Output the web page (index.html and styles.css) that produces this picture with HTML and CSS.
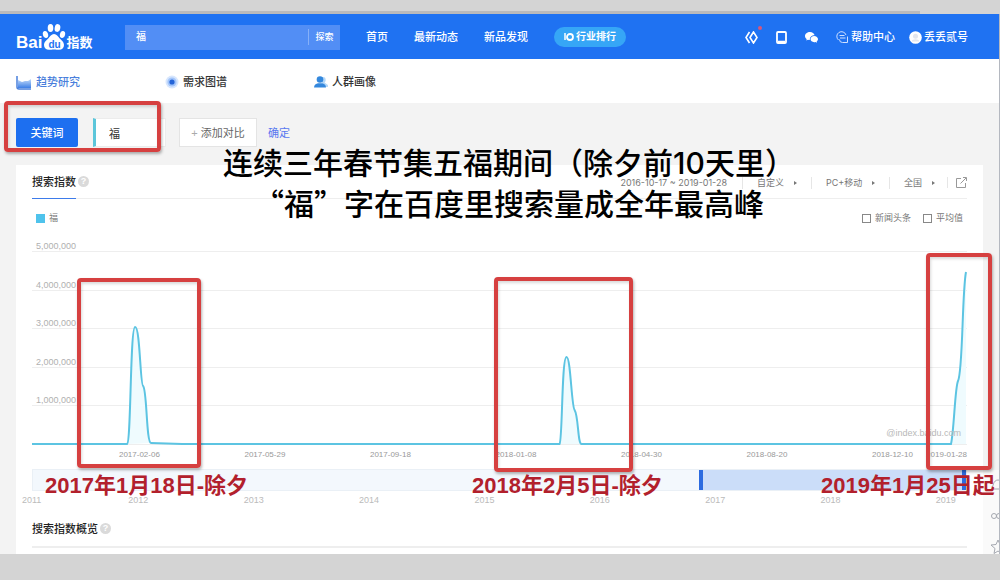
FILE: index.html
```html
<!DOCTYPE html>
<html lang="zh-CN">
<head>
    <meta charset="UTF-8">
    <meta name="viewport" content="width=device-width, initial-scale=1.0">
    <title>百度指数</title>
    <link rel="stylesheet" href="styles.css">
</head>
<body>
    <div class="strip"></div>
    <div class="window">
        <header class="header">
            <a class="logo" href="#">
                <span class="logo-bai">Bai</span>
                <span class="paw">
                    <svg width="24" height="28" viewBox="0 0 24 28" fill="#fff">
                        <ellipse cx="3.5" cy="11.5" rx="2.6" ry="3.6" transform="rotate(-15 3.5 11.5)"/>
                        <ellipse cx="8.5" cy="5" rx="2.8" ry="3.9"/>
                        <ellipse cx="15.5" cy="5" rx="2.8" ry="3.9" transform="rotate(12 15.5 5)"/>
                        <ellipse cx="20.5" cy="11.5" rx="2.6" ry="3.6" transform="rotate(12 20.5 11.5)"/>
                        <path d="M12 11c-2.600 0-4 2.300-5.500 4.200C4.500 17.500 2 18.800 2 22c0 3 2 4.800 5 4.800 2 0 3-.4 5-.4s3 .4 5 .4c3 0 5-1.800 5-4.800 0-3.200-2.500-4.500-4.500-6.800C16 13.300 14.600 11 12 11z"/>
                    </svg>
                    <span class="logo-du">du</span>
                </span>
                <span class="logo-name">指数</span>
            </a>
            <form class="search">
                <input type="text" value="福" aria-label="关键词搜索">
                <button type="button">探索</button>
            </form>
            <nav class="nav">
                <a href="#">首页</a>
                <a href="#">最新动态</a>
                <a href="#">新品发现</a>
                <a class="pill" href="#">
                    <svg width="10" height="10" viewBox="0 0 10 10" fill="none" stroke="#fff"><path d="M1 1v7" stroke-width="1.500"/><circle cx="6" cy="5" r="3" stroke-width="1.800"/></svg>
                    行业排行
                </a>
            </nav>
            <div class="tools">
                <a class="has-dot" href="#" aria-label="数据">
                    <svg width="13" height="13" viewBox="0 0 13 13" fill="none" stroke="#fff" stroke-width="1.600"><path d="M4.500 1L1 6.500 4.500 12M8.500 1L5 6.500 8.500 12 12 6.500z"/></svg>
                </a>
                <a href="#" aria-label="手机版">
                    <svg width="11" height="13" viewBox="0 0 11 13" fill="none" stroke="#fff"><rect x="1" y="1" width="9" height="11" rx="1" stroke-width="1.800"/><path d="M2 10.500h7" stroke-width="1.500"/></svg>
                </a>
                <a href="#" aria-label="微信">
                    <svg width="13" height="11" viewBox="0 0 13 11" fill="#fff"><path d="M5 0C2.200 0 0 1.800 0 4c0 1.200.7 2.300 1.700 3L1.300 8.500 3 7.700c.6.200 1.200.300 1.800.300C4.500 5 6.800 3.300 9.600 3.300 9.200 1.400 7.300 0 5 0z"/><path d="M9.200 4C7 4 5.500 5.400 5.500 7.100s1.600 3.100 3.700 3.100c.5 0 1-.1 1.400-.200l1.400.8-.3-1.300c.8-.6 1.300-1.400 1.300-2.400C13 5.400 11.300 4 9.200 4z"/></svg>
                </a>
                <a class="help" href="#">
                    <svg width="13" height="13" viewBox="0 0 13 13" fill="none" stroke="#cfe0ff"><path d="M2.500 9A4.700 4.700 0 1 1 10 4M3.500 4.500h5M4 7h5.500"/><path d="M11.500 5.500v6H6.500a3 3 0 0 1-3-3"/></svg>
                    帮助中心
                </a>
                <a class="user" href="#">
                    <svg width="13" height="13" viewBox="0 0 13 13"><circle cx="6.500" cy="6.500" r="6.300" fill="#fff"/><circle cx="6.500" cy="5.300" r="2.500" fill="#e3e6ee"/><path d="M2.500 10.500c1-3 7-3 8 0" fill="#e3e6ee"/></svg>
                    丢丢贰号
                </a>
            </div>
        </header>

        <nav class="tabs">
            <a class="active" href="#">
                <svg width="16" height="15" viewBox="0 0 16 15"><defs><linearGradient id="area" x1="0" y1="0" x2="0" y2="1"><stop offset="0" stop-color="#c4dcfa"/><stop offset="1" stop-color="#3d7fe6"/></linearGradient></defs><path d="M2 5l4 2 3-1 3 0 3-2v9H2z" fill="url(#area)"/><path d="M1 1v11q0 2 2 2h12" fill="none" stroke="#4a80dc" stroke-width="1.500"/></svg>
                趋势研究
            </a>
            <a href="#">
                <svg width="14" height="14" viewBox="0 0 14 14"><circle cx="7" cy="7" r="6.500" fill="#d7e6fd"/><circle cx="7" cy="7" r="4.600" fill="#a3c5fa"/><circle cx="7" cy="7" r="2.600" fill="#2464d8"/></svg>
                需求图谱
            </a>
            <a href="#">
                <svg width="14" height="12" viewBox="0 0 14 12"><path d="M8 1c5-1 4 5 2.500 5.500L14 9v2H8z" fill="#b5d8f8"/><circle cx="6" cy="3.500" r="3.300" fill="#3488dd"/><path d="M0 11.500C0 8.500 2 7.500 4 7.200h4c2 .3 4 1.300 4 4.300z" fill="#3488dd"/></svg>
                人群画像
            </a>
        </nav>

        <main class="main">
            <div class="keywords">
                <button class="kw-label" type="button">关键词</button>
                <input class="kw-input" type="text" value="福" aria-label="关键词">
                <button class="kw-add" type="button"><span>+</span> 添加对比</button>
                <a class="kw-ok" href="#">确定</a>
            </div>

            <section class="panel">
                <div class="panel-head">
                    <h2>搜索指数</h2>
                    <span class="q">?</span>
                    <div class="filters">
                        <button type="button">2016-10-17 ~ 2019-01-28</button>
                        <label><select aria-label="时间"><option>自定义</option></select><i></i></label>
                        <label><select aria-label="终端"><option>PC+移动</option></select><i></i></label>
                        <label><select aria-label="地区"><option>全国</option></select><i></i></label>
                        <a href="#" aria-label="导出"><svg width="11" height="11" viewBox="0 0 11 11" fill="none" stroke="#999"><path d="M5 1.500H.5v9h9V6M4.500 6.500L10 1M7 .5h3.500V4"/></svg></a>
                    </div>
                </div>

                <div class="legend">
                    <span class="series">福</span>
                    <label><input type="checkbox">新闻头条</label>
                    <label><input type="checkbox">平均值</label>
                </div>

                <div class="chart">
                    <div class="row top">5,000,000</div>
                    <div class="plot">
                        <div class="row">4,000,000</div>
                        <div class="row">3,000,000</div>
                        <div class="row">2,000,000</div>
                        <div class="row">1,000,000</div>
                        <div class="row"></div>
                        <svg class="curve" viewBox="0 0 934 193" preserveAspectRatio="none">
                            <path class="fill" d="M95 192C99 190 98 75 103 75C108 75 108 133 111 134C115 138 114 191 119 191zM527 192C530 188 529 105 534 105C538 105 539 155 542 158C546 164 545 192 549 192zM918 192C921 180 922 135 925 129C930 120 929 40 933 20V192z"/>
                            <path class="line" d="M0 192H95C99 190 98 75 103 75C108 75 108 133 111 134C115 138 114 191 119 191L150 192H527C530 188 529 105 534 105C538 105 539 155 542 158C546 164 545 192 549 192H918C921 180 922 135 925 129C930 120 929 40 933 20"/>
                        </svg>
                        <span class="watermark">@index.baidu.com</span>
                    </div>
                    <div class="dates">
                        <span>2017-02-06</span><span>2017-05-29</span><span>2017-09-18</span><span>2018-01-08</span><span>2018-04-30</span><span>2018-08-20</span><span>2018-12-10</span><span>2019-01-28</span>
                    </div>
                    <div class="range"><div class="range-on"></div></div>
                </div>
                <div class="years">
                    <span>2011</span><span>2012</span><span>2013</span><span>2014</span><span>2015</span><span>2016</span><span>2017</span><span>2018</span><span>2019</span>
                </div>

                <div class="overview">
                    <h2>搜索指数概览</h2>
                    <span class="q">?</span>
                </div>
            </section>
        </main>

        <aside class="side">
            <svg width="16" height="16" viewBox="0 0 16 16"><path d="M2 12C3 10 3 3 8 3s5 7 6 9z"/></svg>
            <svg width="16" height="16" viewBox="0 0 16 16"><circle cx="4" cy="8" r="2.500"/><circle cx="9" cy="8" r="2.500"/></svg>
            <svg width="16" height="16" viewBox="0 0 16 16"><path d="M8 1l2 4.500 5 .5-4 3.500 1 5-4-2.500L4 14.500l1-5L1 6l5-.5z"/></svg>
        </aside>
    </div>

    <!-- notes drawn over the page -->
    <p class="note">连续三年春节集五福期间（除夕前<span>10</span>天里）<br>“福”字在百度里搜索量成全年最高峰</p>
    <div class="mark mark-kw"></div>
    <div class="mark mark-2017"></div>
    <div class="mark mark-2018"></div>
    <div class="mark mark-2019"></div>
    <p class="caption cap-2017">2017年1月18日-除夕</p>
    <p class="caption cap-2018">2018年2月5日-除夕</p>
    <p class="caption cap-2019">2019年1月25日起</p>
</body>
</html>
```
FILE: styles.css
```css
* {
    box-sizing: border-box;
}
body {
    position: relative;
    margin: 0;
    padding-bottom: 26px;
    background: #d4d4d4;
    font-family: "Liberation Sans", "Noto Sans CJK SC", sans-serif;
    font-size: 11px;
    line-height: 16px;
    color: #333;
    overflow-x: hidden;
}
a {
    color: inherit;
    text-decoration: none;
}
button, input, select {
    font: inherit;
    color: inherit;
    margin: 0;
    padding: 0;
    border: 0;
    background: none;
}
svg {
    display: block;
    flex: none;
}
h2 {
    margin: 0;
    font-size: 11px;
    font-weight: 500;
    color: #222;
}
.strip {
    width: 92%;
    height: 14px;
    border-bottom: 3px solid #bababc;
}
.window {
    position: relative;
    background: #f3f3f3;
    border-right: 1px solid #b4b8c0;
}

/* header */
.header {
    display: flex;
    align-items: center;
    height: 45px;
    padding: 1px 31px 0 16px;
    background: #1f72f2;
    color: #fff;
    font-weight: 500;
    white-space: nowrap;
}
.logo {
    display: flex;
    align-items: flex-end;
    width: 109px;
    height: 28px;
    line-height: 16px;
    font-weight: bold;
}
.logo-bai {
    font-size: 17px;
}
.paw {
    position: relative;
}
.logo-du {
    position: absolute;
    left: 6px;
    bottom: 0;
    font-size: 10px;
    line-height: 12px;
    color: #1f72f2;
}
.logo-name {
    font-size: 13px;
}
.search {
    display: flex;
    align-items: center;
    width: 215px;
    height: 25px;
    background: #528ef5;
}
.search input {
    flex: 1;
    min-width: 0;
    padding-left: 11px;
    font-size: 10px;
}
.search button {
    width: 32px;
    height: 16px;
    border-left: 1px solid #86b0f8;
    font-size: 9px;
    line-height: 16px;
}
.nav {
    display: flex;
    align-items: center;
    gap: 26px;
    margin-left: 26px;
}
.pill {
    display: flex;
    align-items: center;
    gap: 2px;
    height: 20px;
    padding: 0 10px;
    border-radius: 10px;
    background: #36a6f6;
    font-size: 10px;
    font-weight: bold;
}
.tools {
    display: flex;
    align-items: center;
    gap: 18px;
    margin-left: auto;
}
.has-dot {
    position: relative;
}
.has-dot::after {
    content: "";
    position: absolute;
    top: -5px;
    right: -4px;
    width: 4px;
    height: 4px;
    border-radius: 50%;
    background: #d9577a;
}
.help, .user {
    display: flex;
    align-items: center;
    gap: 2px;
}
.user {
    margin-left: -4px;
}

/* tabs */
.tabs {
    display: flex;
    height: 44px;
    padding: 2px 0 0 16px;
    background: #fff;
}
.tabs a {
    display: flex;
    align-items: center;
    gap: 4px;
    width: 149px;
    font-weight: 500;
}
.tabs .active {
    color: #4a7fdc;
}

/* keyword row */
.main {
    padding: 15px 16px 0;
}
.keywords {
    display: flex;
    align-items: center;
    height: 29px;
    margin-bottom: 18px;
}
.keywords button, .kw-input {
    height: 29px;
}
.kw-label {
    width: 62px;
    border-radius: 2px;
    background: #1d6ff0;
    color: #fff;
    font-weight: 500;
}
.kw-input {
    width: 73px;
    margin: 0 13px 0 15px;
    padding-left: 13px;
    border: 1px solid #ececec;
    border-left: 3px solid #5cc6da;
    background: #fff;
}
.kw-add {
    width: 78px;
    border: 1px solid #e4e4e4;
    background: #fff;
    color: #666;
}
.kw-add span {
    color: #aaa;
}
.kw-ok {
    margin-left: 11px;
    color: #5878f0;
}

/* panel */
.panel {
    background: #fff;
}
.panel-head {
    display: flex;
    align-items: stretch;
    height: 34px;
    margin: 0 16px;
    border-bottom: 1px solid #eee;
    line-height: 34px;
}
.panel-head h2 {
    height: 34px;
    border-bottom: 1px solid #3d7bea;
}
.q {
    align-self: center;
    width: 11px;
    height: 11px;
    margin-left: 2px;
    border-radius: 50%;
    background: #dadada;
    color: #fff;
    font-size: 9px;
    font-weight: bold;
    line-height: 11px;
    text-align: center;
}
.filters {
    display: flex;
    align-items: center;
    margin-left: auto;
    padding-top: 2px;
    font-family: Inter, "Noto Sans CJK SC", sans-serif;
    font-size: 9px;
    line-height: 12px;
    color: #777;
}
.filters button {
    padding-right: 15px;
}
.filters label {
    display: flex;
    align-items: center;
    gap: 9px;
    padding: 0 14px;
    border-left: 1px solid #e6e6e6;
}
.filters label:last-of-type {
    padding-right: 12px;
}
.filters select {
    appearance: none;
}
.filters i {
    border: 2px solid transparent;
    border-left: 3px solid #777;
    border-right: 0;
}
.filters a {
    padding-left: 8px;
    border-left: 1px solid #e6e6e6;
}
.legend {
    display: flex;
    align-items: center;
    gap: 12px;
    height: 38px;
    padding: 0 20px;
    font-size: 9px;
    color: #777;
}
.series {
    display: flex;
    align-items: center;
    gap: 4px;
    margin-right: auto;
}
.series::before {
    content: "";
    width: 9px;
    height: 9px;
    background: #4fc3ec;
}
.legend label {
    display: flex;
    align-items: center;
    gap: 4px;
}
.legend input {
    appearance: none;
    width: 9px;
    height: 9px;
    border: 1px solid #888;
}

/* chart */
.chart {
    margin: 0 16px;
}
.row {
    display: flex;
    align-items: flex-end;
    padding-left: 4px;
    border-bottom: 1px solid #eee;
    font-size: 9px;
    line-height: 9px;
    color: #b0b0b0;
}
.top {
    height: 15px;
}
.plot {
    position: relative;
    display: grid;
    grid-template-rows: repeat(5, 1fr);
    height: 193px;
}
.curve {
    position: absolute;
    inset: 0;
    width: 100%;
    height: 100%;
}
.fill {
    fill: #effbfe;
}
.line {
    fill: none;
    stroke: #5cc4e2;
    stroke-width: 2;
    vector-effect: non-scaling-stroke;
}
.watermark {
    position: absolute;
    right: 6px;
    bottom: 6px;
    font-size: 9px;
    line-height: 12px;
    color: #b8b8b8;
}
.dates {
    display: flex;
    height: 24px;
    padding-left: 9.3%;
    font-size: 8px;
    line-height: 20px;
    color: #999;
}
.dates span {
    flex: none;
    width: 14.8%;
}
.dates span:nth-child(7) {
    flex: 1;
    width: auto;
}
.dates span:last-child {
    width: auto;
}
.range {
    height: 22px;
    border: 1px solid #eaf0f6;
    background: #f3f8fd;
}
.range-on {
    width: 29%;
    height: 20px;
    margin-left: 71.4%;
    max-width: 28.6%;
    border: solid #2c6be0;
    border-width: 0 4px;
    background: #cbddf9;
}
.years {
    display: grid;
    grid-template-columns: 106fr repeat(7, 115fr) 47fr;
    padding-left: 6px;
    font-size: 9px;
    line-height: 19px;
    color: #bbb;
}
.overview {
    display: flex;
    height: 38px;
    margin: 0 16px;
    border-bottom: 2px solid #eee;
    line-height: 38px;
}
.panel::after {
    content: "";
    display: block;
    height: 6px;
}
.side {
    position: absolute;
    right: 0;
    bottom: 0;
    display: flex;
    flex-direction: column;
    gap: 15px;
    width: 16px;
    height: 84px;
    padding: 7px 0 0 7px;
    background: #fafafa;
    overflow: hidden;
}
.side svg {
    fill: none;
    stroke: #a5a8b0;
}

/* notes */
.note, .caption {
    position: absolute;
    margin: 0;
    white-space: nowrap;
}
.note {
    top: 141px;
    left: 21.9%;
    width: 580px;
    font-family: "Noto Sans CJK SC", sans-serif;
    font-size: 30px;
    font-weight: 500;
    line-height: 41px;
    text-align: center;
    color: #000;
}
.note span {
    font-family: Inter, sans-serif;
    line-height: 30px;
}
.caption {
    top: 473px;
    font-size: 22px;
    font-weight: bold;
    line-height: 26px;
    color: #b2202c;
}
.cap-2017 {
    left: 4.5%;
}
.cap-2018 {
    left: 47.2%;
}
.cap-2019 {
    left: 82.1%;
}
.mark {
    position: absolute;
    border: 4px solid #d64040;
    border-radius: 4px;
    box-shadow: 1px 2px 3px rgba(0, 0, 0, 0.3), inset 1px 2px 3px rgba(0, 0, 0, 0.15);
}
.mark-kw {
    top: 101px;
    left: 4px;
    width: 157px;
    height: 51px;
}
.mark-2017 {
    top: 278px;
    left: 7.7%;
    width: 12.4%;
    height: 190px;
}
.mark-2018 {
    top: 277px;
    left: 49.4%;
    width: 13.9%;
    height: 195px;
}
.mark-2019 {
    top: 253px;
    left: 92.6%;
    width: 6.6%;
    height: 217px;
}
```
